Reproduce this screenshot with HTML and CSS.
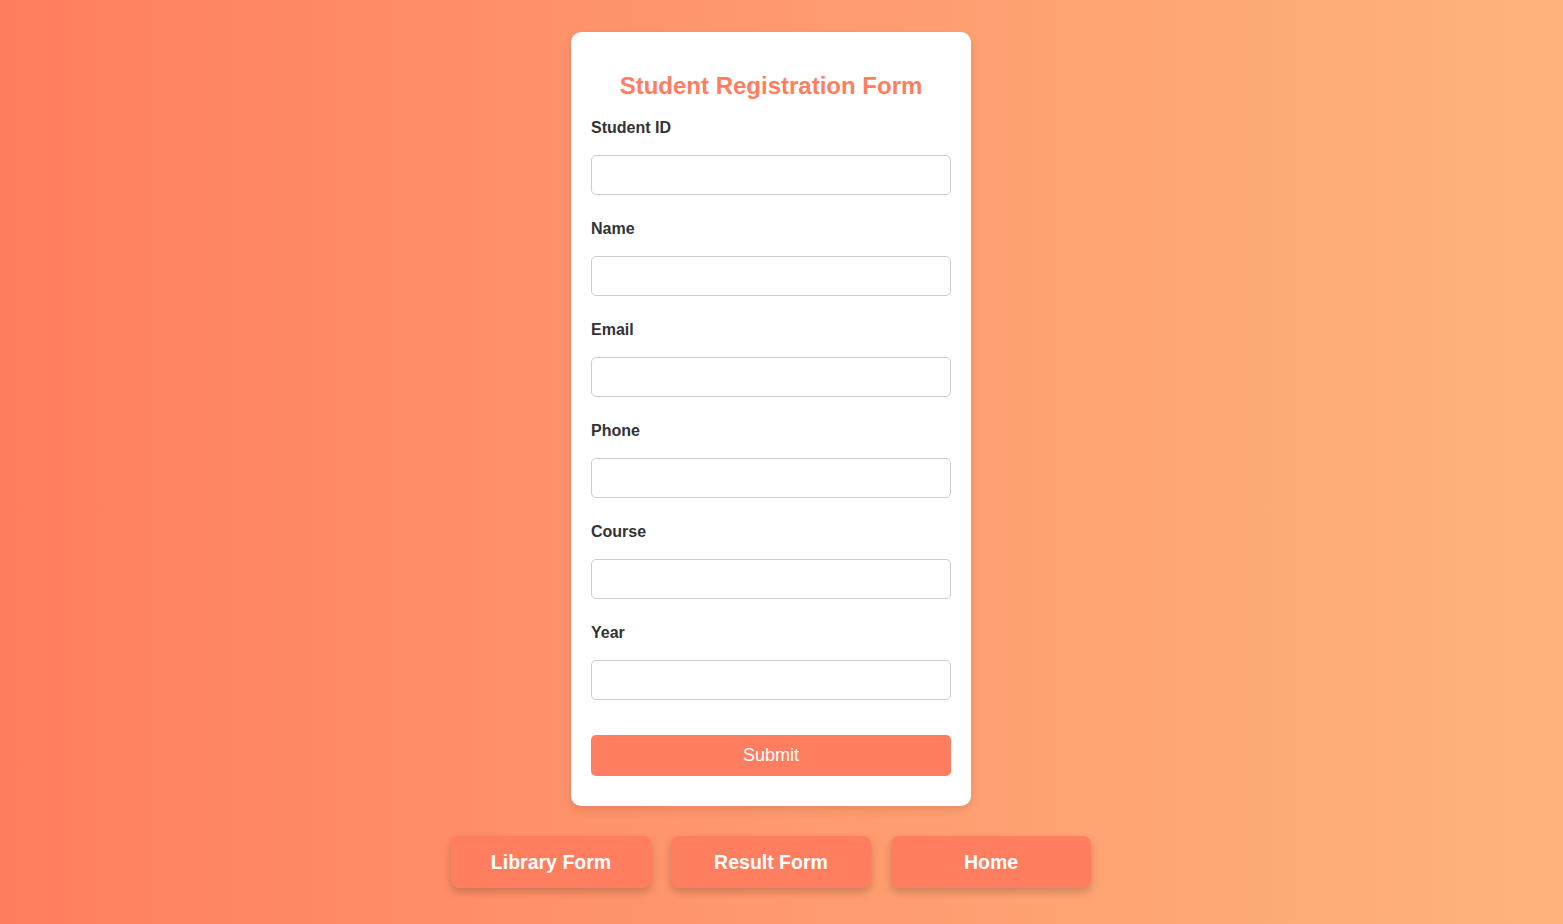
FILE: index.html
```html
<!DOCTYPE html>
<html lang="en">
<head>
<meta charset="utf-8">
<title>Student Registration Form</title>
<link rel="stylesheet" href="styles.css">
</head>
<body>
<main class="page">
  <div class="card">
    <h2 class="title">Student Registration Form</h2>
    <form class="form">
      <label class="label" for="sid">Student ID</label>
      <input class="input" id="sid" type="text">
      <label class="label" for="name">Name</label>
      <input class="input" id="name" type="text">
      <label class="label" for="email">Email</label>
      <input class="input" id="email" type="email">
      <label class="label" for="phone">Phone</label>
      <input class="input" id="phone" type="text">
      <label class="label" for="course">Course</label>
      <input class="input" id="course" type="text">
      <label class="label" for="year">Year</label>
      <input class="input" id="year" type="text">
      <button class="submit" type="button">Submit</button>
    </form>
  </div>
  <nav class="links">
    <a class="link-btn" href="#">Library Form</a>
    <a class="link-btn" href="#">Result Form</a>
    <a class="link-btn" href="#">Home</a>
  </nav>
</main>
</body>
</html>
```
FILE: styles.css
```css
html, body {
  margin: 0;
  padding: 0;
}
body {
  min-height: 100vh;
  background: linear-gradient(to right, #ff7e5f, #feb47b);
  font-family: "Liberation Sans", Arial, sans-serif;
}
.page {
  display: flex;
  flex-direction: column;
  align-items: center;
  padding: 32px 21px 0 0;
}
.card {
  width: 400px;
  box-sizing: border-box;
  background: #fff;
  border-radius: 10px;
  padding: 20px 20px 30px;
  box-shadow: 0 4px 10px rgba(0, 0, 0, 0.1);
}
.title {
  margin: 20px 0 18px;
  text-align: center;
  color: #ff7e5f;
  font-size: 24px;
  line-height: 28px;
  font-weight: bold;
}
.form {
  display: flex;
  flex-direction: column;
}
.label {
  display: block;
  font-size: 16px;
  line-height: 18px;
  font-weight: bold;
  color: #333;
  padding-top: 1px;
  margin-bottom: 18px;
}
.input {
  display: block;
  box-sizing: border-box;
  width: 100%;
  height: 40px;
  margin: 0 0 24px;
  padding: 10px;
  border: 1px solid #ccc;
  border-radius: 5px;
  font-family: inherit;
  font-size: 16px;
  background: #fff;
}
.submit {
  margin-top: 11px;
  height: 41px;
  width: 100%;
  border: none;
  border-radius: 5px;
  background: #ff7e5f;
  color: #fff;
  font-family: inherit;
  font-size: 18px;
  cursor: pointer;
}
.links {
  display: flex;
  gap: 20px;
  margin-top: 30px;
}
.link-btn {
  display: block;
  width: 200px;
  box-sizing: border-box;
  padding: 15px 0;
  line-height: 22px;
  text-align: center;
  background: #ff7e5f;
  color: #fff;
  font-size: 19.5px;
  font-weight: bold;
  text-decoration: none;
  border-radius: 8px;
  box-shadow: 0 4px 8px rgba(0, 0, 0, 0.2);
}
```
